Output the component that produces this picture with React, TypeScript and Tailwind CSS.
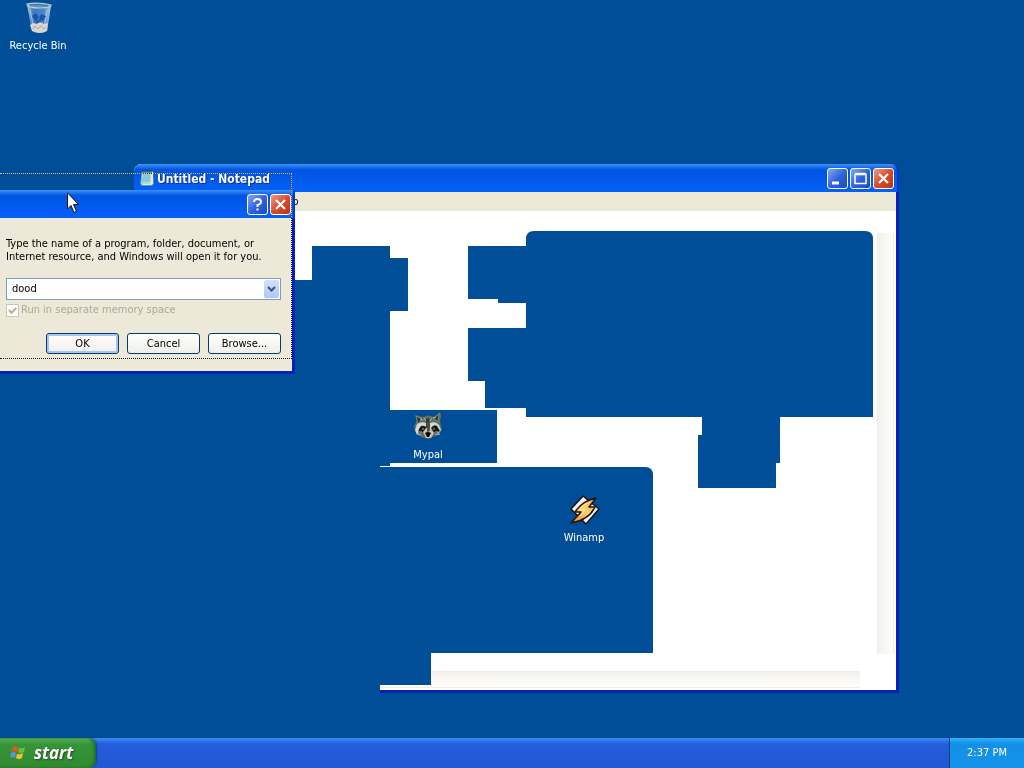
import type { ReactNode } from "react";

const ui = "font-['DejaVu_Sans_Condensed','Noto_Sans',sans-serif]";

function RecycleBinIcon() {
  return (
    <svg viewBox="0 0 32 32" className="size-8" aria-hidden="true">
      <defs>
        <linearGradient id="glass" x1="0" x2="1">
          <stop offset="0" stopColor="#a9c9ea" />
          <stop offset="0.25" stopColor="#3f7cc4" />
          <stop offset="0.7" stopColor="#4a86cb" />
          <stop offset="1" stopColor="#b5cfe6" />
        </linearGradient>
      </defs>
      <path d="M5 3 L29 4 L25 29 Q17 33 10 29Z" fill="url(#glass)" />
      <path d="M8 8 L12 26 M25 8 L22 26" stroke="#cfe2f4" strokeWidth="1" opacity=".6" />
      <path d="M10 14l4-3 3 4-3 5zm9-2 5 2-3 5-4-2zm-6 9 7 0-2-4z" fill="#1c56a6" />
      <path d="M8 23l3-2 4 1 3-2 4 2 4-1-1 8q-7 4-15 0z" fill="#dad5cf" />
      <path d="M11 27l2-3 3 3 3-3 3 3 2-2" stroke="#b3a7a2" fill="none" />
      <path d="M5 2Q16 0 29 3Q29 6 17 6Q6 6 5 2Z" fill="#5f93c6" stroke="#c3cdd2" strokeWidth="1.200" />
      <path d="M8 3Q16 1 26 4" stroke="#456f96" fill="none" />
    </svg>
  );
}

function RaccoonIcon() {
  return (
    <svg viewBox="0 0 32 32" className="size-8" aria-hidden="true">
      <path d="M3 4l8 2q6-3 11 0l6-5q2 4 0 8l1 6 1 4-3 4-5 2-5 3-5-1-4-2-4-4-2-5 3-7z" fill="#626d63" />
      <path d="M4 5l6 3-4 5zm23-2-5 4 4 4z" fill="#2b3735" stroke="#84938a" strokeWidth=".8" />
      <path d="M5 13q5-3 9-1v5l-5 2-4 5-2-5zm13-1q6-2 9 2l2 5-3 4-4-4-4-2z" fill="#d6d8cf" />
      <path d="M9 15q4-1 6 2l-3 4-6 1q0-4 3-7zm10 2q3-4 6-2l3 5-3 2-6-2z" fill="#151b1b" />
      <path d="M14 8l3-1 1 9-1 6h-2l-1-7z" fill="#2e3734" />
      <path d="M11 21l3-4h5l3 5-3 5h-5z" fill="#c9c3ae" />
      <path d="M15 11l2 0 1 9-3 1z" fill="#4a534b" />
      <path d="M13 22q3-2 6 0l-2 4h-2z" fill="#090b0b" />
      <circle cx="11" cy="18" r="1" fill="#8a7048" />
      <circle cx="22" cy="18" r="1" fill="#8a7048" />
      <path d="M5 23l4 1m-3-3 4 0m18 2-5 1m4-3-4 0M8 8l3 1m10-2 3-1M12 7l2 3M20 7l-2 3" stroke="#a6b7a7" strokeWidth="1" />
    </svg>
  );
}

function WinampIcon() {
  return (
    <svg viewBox="0 0 32 32" className="size-8" aria-hidden="true">
      <defs>
        <linearGradient id="bolt" x1="1" y1="0" x2="0" y2="1">
          <stop offset="0" stopColor="#f79a20" />
          <stop offset="0.45" stopColor="#ffd478" />
          <stop offset="1" stopColor="#e8811a" />
        </linearGradient>
      </defs>
      <path d="M15 2 L31 15 L18 30 L3 15Z" fill="#f6f5fa" stroke="#111" strokeWidth="1.500" strokeLinejoin="round" />
      <path d="M28 4 Q14 7 7 18 L13 18 L3 29 Q21 26 27 13 L21 13Z" fill="url(#bolt)" stroke="#24150b" strokeWidth="1.500" strokeLinejoin="round" />
      <path d="M22 8Q14 11 11 16h6l-5 6" fill="none" stroke="#ffefb4" strokeWidth="1" />
    </svg>
  );
}

function NotepadIcon() {
  return (
    <svg viewBox="0 0 16 16" className="size-4" aria-hidden="true">
      <path d="M3 1h11l1 13-2 2H2L1 13z" fill="#5796ae" />
      <path d="M3 2h9l-1 12H2z" fill="#a5dce8" />
      <path d="M12 2h2v12l-2 1H3v-1h8z" fill="#ece7c5" />
      <path d="M4 5h7M4 7h7M3 9h8M3 11h8" stroke="#70b4cb" />
      <path d="M4 0v3M6 0v3M8 0v3M10 0v3M12 0v3" stroke="#233d50" />
    </svg>
  );
}

function WindowsFlag() {
  return (
    <svg viewBox="0 0 16 16" className="size-4" aria-hidden="true">
      <path d="M3 2q3-2 5 0L7 7Q4 5 1 7z" fill="#e45724" />
      <path d="M9 3q3 1 6-1l-1 5q-3 2-6 0z" fill="#74bd39" />
      <path d="M1 8q3-2 5 0l-1 5q-3-2-5 0z" fill="#5a91e8" />
      <path d="M7 9q3 1 6-1l-1 5q-3 2-6 0z" fill="#f4c52b" />
    </svg>
  );
}

function CaptionButton({ label, red = false, children }: { label: string; red?: boolean; children: ReactNode }) {
  return (
    <button
      aria-label={label}
      className={
        red
          ? "size-5.25 rounded-[3px] border border-white bg-linear-to-br from-[#ee9980] via-[#d94c2d] to-[#b93311]"
          : "size-5.25 rounded-[3px] border border-white bg-linear-to-br from-[#84a7f3] via-[#3165dd] to-[#1749bd]"
      }
    >
      <svg viewBox="0 0 19 19" className="size-full" fill="none" stroke="white" aria-hidden="true">
        {children}
      </svg>
    </button>
  );
}

const cross = <path d="M5 5l9 9M14 5l-9 9" strokeWidth="2.200" />;

function DesktopIcon({ label, place, children }: { label: string; place: string; children: ReactNode }) {
  return (
    <a href="#" className={`absolute flex w-19 flex-col items-center text-white ${place}`}>
      {children}
      <span className="mt-1 leading-4 whitespace-nowrap">{label}</span>
    </a>
  );
}

const titleBar = "flex shrink-0 items-center bg-linear-to-b from-[#3c91f7] via-[#0055e2] via-20% to-[#0460f8]";

function NotepadWindow() {
  return (
    <section className="absolute top-41 left-33.5 flex h-[529px] w-[765px] flex-col rounded-t-lg border-r-3 border-b-3 border-[#0822b8] bg-white">
      <header className={`${titleBar} -mr-[3px] h-7 gap-0.5 rounded-t-lg border-r-2 border-[#0838c8] pr-0.75 pl-1.25`}>
        <NotepadIcon />
        <h1 className="flex-1 pt-0.5 text-[12px] leading-4 font-bold text-white [text-shadow:1px_1px_#0a2f8c]">Untitled - Notepad</h1>
        <div className="flex gap-0.5 pt-px">
          <CaptionButton label="Minimize">
            <path d="M4 14h7" strokeWidth="3" />
          </CaptionButton>
          <CaptionButton label="Maximize">
            <path d="M4 5.500h11v9H4zM4 4.500h11" strokeWidth="1.500" />
          </CaptionButton>
          <CaptionButton label="Close" red>
            {cross}
          </CaptionButton>
        </div>
      </header>
      <nav className="flex h-4.75 shrink-0 items-center bg-[#ece9d8] pl-35.5">
        <button className="leading-4">Help</button>
      </nav>
      <div className="flex min-h-0 flex-1 flex-col">
        <div className="flex flex-1 justify-end pt-5.5 pr-0.5">
          <div className="w-4.25 border-x border-[#eeede5] bg-linear-to-r from-[#f3f1ec] to-[#fefefb]" />
        </div>
        <div className="mt-4.25 mr-9 mb-0.5 h-4.25 border-y border-[#eeede5] bg-linear-to-b from-[#f3f1ec] to-[#fefefb]" />
      </div>
    </section>
  );
}

function DragTrails() {
  return (
    <svg viewBox="134 164 765 529" className="absolute top-41 left-33.5 h-[529px] w-[765px]" fill="#004e98" aria-hidden="true">
      <path d="M134 280H312V246H390V258H408V311H390V410H497V463H390V466H380V467H645Q653 467 653 475V653H431V685H380V693H134Z" />
      <path d="M468 246H526V239Q526 231 534 231H865Q873 231 873 239V417H780V463H776V488H698V435H702V417H526V408H485V381H468V328H526V303H498V299H468Z" />
    </svg>
  );
}

const pushButton =
  "h-5.25 w-18.25 rounded-[3px] border border-[#003c74] bg-linear-to-b from-white to-[#f0efe8] leading-4";

function RunDialog() {
  return (
    <section className="absolute top-47.5 left-0 flex h-46 w-[295px] flex-col border-r-3 border-b-3 border-[#0822b8] bg-[#ece9d8]">
      <header className={`${titleBar} -mr-[3px] h-7 justify-end gap-0.5 border-r-2 border-[#0838c8] pt-px pr-0.5`}>
        <CaptionButton label="Help">
          <path d="M6 7Q6 4 9.500 4T13 7Q13 9 9.500 10V12M9.500 13.500V15.500" strokeWidth="2" />
        </CaptionButton>
        <CaptionButton label="Close" red>
          {cross}
        </CaptionButton>
      </header>
      <form className="flex flex-col pt-4.75 pr-3 pl-1.5" onSubmit={(e) => e.preventDefault()}>
        <label htmlFor="command" className="leading-[13px] whitespace-nowrap">
          Type the name of a program, folder, document, or
          <br />
          Internet resource, and Windows will open it for you.
        </label>
        <div className="mt-3.75 flex h-5.5 w-[275px] border border-[#7f9db9] bg-white p-px">
          <input id="command" defaultValue="dood" className="min-w-0 flex-1 px-1 leading-4 outline-none" />
          <button type="button" aria-label="Show recent commands" className="flex w-3.75 items-center justify-center rounded-xs bg-linear-to-b from-[#d3e0fe] to-[#b2c6f7]">
            <svg viewBox="0 0 9 6" className="h-1.5 w-2.25" fill="none" stroke="#3d5480" strokeWidth="2" aria-hidden="true">
              <path d="M1 1l3.500 3.500L8 1" />
            </svg>
          </button>
        </div>
        <label className="mt-0.5 flex h-4 items-center gap-0.5 text-[#aca899]">
          <span className="grid size-3.25 place-items-center">
            <input type="checkbox" defaultChecked disabled className="col-start-1 row-start-1 size-3.25 appearance-none border border-[#cac8bb] bg-white" />
            <svg viewBox="0 0 9 9" className="col-start-1 row-start-1 size-2.25" fill="none" stroke="#b5b2a3" strokeWidth="2" aria-hidden="true">
              <path d="M1 4l2.500 3L8 2" />
            </svg>
          </span>
          Run in separate memory space
        </label>
        <div className="mt-3.75 flex w-[275px] justify-end gap-2">
          <button className={`${pushButton} shadow-[inset_0_0_0_2px_#aac4f0]`}>OK</button>
          <button type="button" className={pushButton}>Cancel</button>
          <button type="button" className={pushButton}>Browse...</button>
        </div>
      </form>
    </section>
  );
}

function Taskbar() {
  return (
    <footer className="z-10 mt-auto flex h-7.5 bg-linear-to-b from-[#3f8cf3] via-[#245edb] via-20% to-[#2258d2]">
      <button className="flex w-24 items-center gap-2 rounded-r-lg bg-linear-to-b from-[#5ab65a] via-[#36943a] via-20% to-[#318a2f] pl-2.5 shadow-[inset_-2px_0_3px_#226c24,1px_0_2px_#173e96]">
        <WindowsFlag />
        <span className="font-['Open_Sans','Noto_Sans',sans-serif] text-[17px] leading-6 font-bold text-white italic [text-shadow:1px_1px_2px_#214d1c]">
          start
        </span>
      </button>
      <div className="ml-auto flex w-18.75 items-center justify-center border-l border-[#103a78] bg-linear-to-b from-[#30b4f7] via-[#1290e8] via-20% to-[#1593eb] text-white">
        <time>2:37 PM</time>
      </div>
    </footer>
  );
}

export default function App() {
  return (
    <main className={`relative flex min-h-screen flex-col overflow-hidden bg-[#004e98] text-[11px] text-black ${ui}`}>
      <NotepadWindow />
      <DragTrails />
      <DesktopIcon label="Recycle Bin" place="top-0.5 left-0">
        <RecycleBinIcon />
      </DesktopIcon>
      <DesktopIcon label="Mypal" place="top-[411px] left-97.5">
        <RaccoonIcon />
      </DesktopIcon>
      <DesktopIcon label="Winamp" place="top-[494px] left-136.5">
        <WinampIcon />
      </DesktopIcon>
      <RunDialog />
      <div className="pointer-events-none absolute top-43.25 left-0 h-46.5 w-73 border-y border-r border-dotted border-white mix-blend-difference" />
      <svg viewBox="0 0 12 21" className="pointer-events-none absolute top-48 left-16.75 h-5.25 w-3" aria-hidden="true">
        <path d="M.5 .8V17L4 13.500 7 20.500 9.500 19.300 6.500 12.500H11.500Z" fill="white" stroke="black" strokeWidth=".9" />
      </svg>
      <Taskbar />
    </main>
  );
}
